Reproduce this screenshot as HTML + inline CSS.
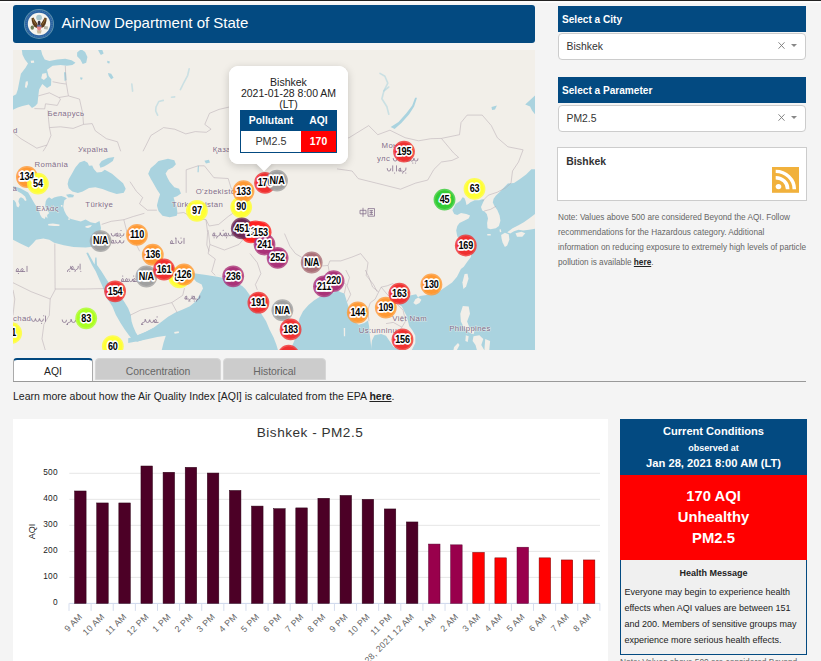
<!DOCTYPE html>
<html><head><meta charset="utf-8"><title>AirNow Department of State</title>
<style>
*{box-sizing:border-box;margin:0;padding:0}
html,body{width:821px;height:661px;overflow:hidden;background:#f4f4f4;font-family:"Liberation Sans",sans-serif;color:#222}
body{position:relative}
.abs{position:absolute}
.blue{background:#034a81;color:#fff}
#topline{left:0;top:0;width:821px;height:1px;background:#222}
#topwhite{left:0;top:1px;width:821px;height:2px;background:#fcfcfc}
#hdr{left:13px;top:5px;width:522px;height:38px;border-radius:3px}
#hdr .t{position:absolute;left:48.6px;top:8px;font-size:15px;line-height:20px;white-space:nowrap}
#map{left:13px;top:50px;width:522px;height:300px;overflow:hidden;background:#f2efe9}
.bar{left:558px;width:248px;height:26px;font-weight:bold;font-size:10.1px;line-height:27.6px;padding-left:4px;white-space:nowrap}
.sel{left:557.5px;width:248.3px;height:27px;background:#fff;border:1px solid #ccc;border-radius:4px;font-size:10.4px;line-height:25px;padding-left:8px;color:#333}
.sel .x{position:absolute;left:219.3px;top:8px;width:7px;height:7px}
.sel .a{position:absolute;left:232.2px;top:9.9px;width:0;height:0;border-left:3.2px solid transparent;border-right:3.2px solid transparent;border-top:3.2px solid #888}
#feed{left:557.4px;top:147px;width:249.6px;height:53.5px;background:#fff;border:1px solid #ccc}
#feed b{position:absolute;left:7.8px;top:6.8px;font-size:10.4px;line-height:14px;color:#333}
#note{left:558px;top:210px;width:260px;font-size:8.23px;line-height:15px;color:#666;white-space:nowrap}
#note b{color:#222;text-decoration:underline}
.tab{top:358px;height:23px;font-size:10.4px;line-height:24px;text-align:center;border-radius:4px 4px 0 0}
.tab.off{background:#ccc;color:#666;border:1px solid #d6d6d6;height:22px;line-height:25.6px}
.tab.on{background:#fff;color:#222;border:1px solid #aaa;border-top:2px solid #034a81;border-bottom:none;height:24px;line-height:23.6px}
#tabline{left:13px;top:381px;width:793px;height:1px;background:#999}
#learn{left:13px;top:389px;font-size:10.5px;line-height:14px;white-space:nowrap;color:#222}
#learn b{text-decoration:underline}
#chart{left:13px;top:419px;width:595px;height:242px;background:#fff;overflow:hidden}
#cc{left:620px;top:419px;width:187px;height:236px;background:#f0f0f0;border:1px solid #034a81;border-top:none}
#cc .h{position:absolute;left:-1px;top:0;width:187px;height:56px;text-align:center;font-weight:bold}
#cc .r{position:absolute;left:-1px;top:56px;width:187px;height:84.5px;background:#ff0000;color:#fff;text-align:center;font-weight:bold;font-size:14.8px;line-height:21px;padding-top:11.2px}
#cc .hm{position:absolute;left:0;top:148px;width:185px;text-align:center;font-weight:bold;font-size:9px;line-height:12px;color:#222}
#cc .tx{position:absolute;left:3.5px;top:164.7px;width:190px;font-size:9px;line-height:16.1px;color:#222;white-space:nowrap}
#note2{left:620px;top:656.3px;font-size:8.4px;line-height:12px;color:#666;white-space:nowrap}
</style></head><body>
<div id="topline" class="abs"></div><div id="topwhite" class="abs"></div>
<div id="hdr" class="abs blue"><div class="t">AirNow Department of State</div>
<svg class="abs" style="left:11px;top:4px" width="30" height="30" viewBox="0 0 30 30"><circle cx="15" cy="15" r="15" fill="#5f93ad"/><circle cx="15" cy="15" r="14.1" fill="#2b63a1"/><circle cx="15" cy="15" r="13" fill="none" stroke="#7fa6c9" stroke-width="0.6" stroke-dasharray="1 1.2" opacity=".7"/><circle cx="15" cy="15" r="11.2" fill="#f6f4ee"/>
<circle cx="15.1" cy="8.6" r="2.9" fill="#a9c7cf"/>
<path d="M7.5 9.2L9.5 8.4L10.9 10.9L12.7 13.8L13.8 15.8L12.7 19L10.4 17.8L8.6 15L7.8 12.1Z" fill="#5b3a1c"/>
<path d="M22.7 9.2L20.7 8.4L19.3 10.9L17.6 13.8L16.4 15.8L17.6 19L19.9 17.8L21.6 15L22.4 12.1Z" fill="#5b3a1c"/>
<path d="M9 9.5L10 12.5L12 15.5M21.2 9.5L20.2 12.5L18.2 15.5" stroke="#c9a24a" stroke-width=".7" fill="none" opacity=".7"/>
<ellipse cx="15.1" cy="14" rx="1.5" ry="2.2" fill="#3a3340"/>
<ellipse cx="8.3" cy="18.6" rx="1.7" ry="2.2" fill="#56663a" opacity=".85"/>
<path d="M20 17l4 .5l-.4 3l-3.6-.6z" fill="#8f8a78" opacity=".6"/>
<path d="M12.7 21.3h5l-.8 3.2h-3.4z" fill="#c9b89a"/>
<path d="M12.95 16.2h4.4v2.8q0 2-2.2 2.7q-2.2-.7-2.2-2.7z" fill="#e58686"/><path d="M12.95 16.2h4.4v1.3h-4.4z" fill="#3b5ea0"/>
</svg>
</div>
<div id="map" class="abs"><svg class="abs" style="left:0;top:0" width="522" height="300" viewBox="0 0 522 300" font-family="Liberation Sans, sans-serif">
<g fill="#aad3df">
<path d="M8.7 -1.3L9.5 4.8L11.9 9.5L15.0 13.5L12.7 17.4L7.9 23.8L6.3 31.7L4.8 39.6L3.2 44.3L-1.3 46.7L-1.3 60.2L4.8 57.6L9.5 56.1L15.8 54.5L19.0 58.1L22.2 56.1L24.5 53.5L25.3 45.9L26.1 39.6L29.3 34.0L34.0 38.0L38.0 35.6L38.3 29.3L35.6 26.1L34.0 19.8L39.6 15.8L47.5 15.0L53.8 15.8L59.4 15.0L62.5 12.7L58.6 10.3L52.3 8.7L44.3 9.5L36.4 11.1L31.7 9.5L29.3 4.8L27.7 -1.3Z"/>
<path d="M64.1 2.4L68.1 -0.8L72.1 1.9L74.4 7.1L73.2 12.7L69.7 13.9L67.3 9.5L64.1 6.3Z"/>
<path d="M84.7 -0.8L89.0 -0.8L90.6 3.5L87.9 5.1L86.3 2.4Z"/>
<path d="M51.0 22.2L52.9 22.2L53.5 30.1L51.6 30.9Z"/>
<path d="M94.2 10.8L96.9 11.4L96.3 13.5L94.4 13.0Z"/>
<path d="M95.0 23.0L98.2 23.8L100.6 27.7L98.2 29.3L95.8 26.1Z"/>
<path d="M67.3 27.2L69.7 27.7L68.9 29.8L67.3 29.3Z"/>
<path d="M54.6 134.0L55.7 129.3L58.9 123.8L62.2 117.7L66.5 112.4L71.3 110.8L74.7 112.7L76.0 115.8L79.2 115.5L80.8 119.0L83.9 122.5L88.7 121.9L91.8 119.8L95.0 121.4L99.0 123.8L104.5 128.5L110.1 133.3L112.7 138.8L110.8 142.8L103.7 143.9L95.8 141.5L89.5 139.1L82.3 137.2L76.0 138.0L69.7 141.5L64.9 143.1L59.4 141.5L55.7 138.3Z"/>
<path d="M86.3 114.3L88.7 111.1L95.0 107.9L101.3 107.1L99.8 111.1L95.0 114.3L91.1 116.6L87.4 117.7Z"/>
<path d="M53.0 144.8L57.0 144.0L61.0 145.1L60.2 147.2L55.4 147.5Z"/>
<path d="M-1.2 135.7L7.3 138.2L15.1 142.4L18.2 147.8L20.6 152.1L22.4 155.1L24.8 158.1L26.0 161.1L27.2 164.8L29.0 167.8L31.7 169.0L32.7 166.6L34.5 168.4L34.1 165.0L36.3 163.0L33.9 159.9L32.1 156.3L32.7 151.5L33.9 149.0L36.1 147.2L38.7 149.0L41.1 147.6L44.8 146.6L48.4 146.0L52.0 147.2L53.9 148.4L51.4 150.3L50.8 153.3L50.2 156.9L51.4 161.1L53.3 164.8L55.7 167.8L58.1 169.0L62.9 170.2L67.8 171.4L72.6 169.6L77.5 172.3L82.3 173.3L86.5 171.1L88.0 178.0L86.5 186.0L84.0 193.0L80.0 196.7L72.6 197.6L60.5 197.0L50.8 195.2L41.2 192.8L36.3 189.8L30.3 188.6L23.0 189.8L20.0 193.2L15.7 197.6L7.3 193.4L0.0 189.8L-5.0 189.5Z"/>
<path d="M73.3 203.0L75.0 202.6L81.6 214.6L82.3 207.5L83.5 207.5L84.0 214.9L88.6 221.6L92.8 228.3L96.1 233.2L105.3 243.2L111.1 251.5L115.2 258.2L117.7 264.8L118.6 271.5L120.2 276.5L122.7 282.3L124.7 285.5L130.2 283.1L136.9 279.8L143.5 276.5L148.5 274.5L148.5 284.0L140.2 286.0L133.5 288.5L124.4 291.8L119.9 290.1L116.1 285.6L111.9 279.8L107.7 273.2L102.8 264.8L99.4 256.5L93.6 247.4L89.5 236.6L86.1 229.1L82.8 221.6L79.0 214.9Z"/>
<path d="M148.7 110.3L155.0 108.7L161.3 110.3L162.9 114.3L159.8 117.4L155.0 119.8L152.6 123.4L154.2 127.2L156.6 131.7L161.3 137.2L166.1 138.8L168.0 143.5L164.0 146.2L160.5 147.5L162.1 152.3L163.7 157.0L164.5 163.3L163.7 165.7L156.6 167.3L149.5 165.7L145.5 161.0L143.9 155.4L145.5 149.1L147.1 144.3L143.9 139.6L140.8 134.0L137.6 128.5L135.2 123.8L137.6 118.2L142.3 114.3L145.5 111.1Z"/>
<path d="M191.4 110.8L195.9 109.8L197.0 112.4L193.0 113.6Z"/>
<path d="M184.8 115.8L186.0 115.8L185.7 122.2L184.5 122.2Z"/>
<path d="M137.0 201.0L141.0 200.5L145.0 204.0L152.0 212.0L162.0 218.0L172.0 220.0L179.5 222.0L177.0 227.0L170.0 231.0L162.0 232.0L157.0 229.0L155.5 222.0L153.0 227.0L147.0 222.0L143.0 215.0L138.0 207.0Z"/>
<path d="M177.8 223.9L179.1 222.3L182.4 223.6L193.3 225.0L204.1 226.8L215.0 228.7L202.0 223.6L210.2 227.0L218.3 230.4L229.2 235.9L232.6 239.3L236.0 244.0L248.3 263.8L253.1 271.3L256.5 279.4L260.6 287.6L263.3 294.4L265.7 302.6L147.9 303.5L150.6 292.6L152.8 285.7L144.2 287.1L135.2 288.9L126.1 291.1L115.2 292.9L115.2 288.2L120.6 287.1L126.1 284.4L133.3 281.7L140.6 277.7L147.9 272.2L155.1 266.8L162.4 262.6L169.7 259.5L176.9 256.3L181.5 252.6L184.2 249.0L187.8 242.6L190.0 238.5L188.7 234.5L183.3 231.7L179.6 227.6Z"/>
<path d="M276.0 303.5L280.6 292.6L283.8 284.4L284.6 276.2L286.4 268.6L290.0 261.3L295.5 255.0L300.9 250.4L306.9 246.8L314.2 243.9L320.9 242.3L324.5 240.5L327.8 242.3L331.4 243.5L333.6 250.8L335.9 258.1L337.8 265.3L341.4 271.7L345.9 274.8L351.4 273.0L355.0 270.4L356.1 276.2L356.8 285.3L357.7 292.6L359.0 303.5Z"/>
<path d="M357.8 302.8L358.4 295.5L359.0 290.6L361.5 285.2L368.2 283.9L373.0 285.8L375.5 289.4L377.9 293.1L380.3 296.7L385.2 299.2L392.5 302.8Z"/>
<path d="M397.4 302.8L402.3 293.1L402.3 285.8L399.8 280.9L396.2 276.0L395.0 271.2L393.1 265.1L391.3 261.4L388.9 256.5L385.2 254.1L392.3 247.2L398.2 245.3L403.1 244.3L405.0 247.2L407.0 245.9L411.8 245.3L419.6 244.3L427.4 240.4L433.3 236.5L439.1 232.6L444.0 226.8L447.9 219.0L450.8 216.8L454.1 212.0L457.9 207.0L458.6 201.7L456.4 196.4L448.8 190.8L444.3 186.5L443.2 180.5L444.3 176.0L446.5 172.9L451.1 170.7L455.6 168.4L457.1 165.4L453.3 163.9L448.0 163.1L444.3 164.9L441.2 163.9L439.4 160.2L442.6 153.9L447.4 150.7L449.6 147.2L451.4 148.1L452.6 151.0L453.5 155.1L455.3 153.9L457.4 152.2L461.7 150.2L466.2 150.2L469.2 149.3L471.5 149.5L470.0 152.5L468.0 157.1L469.2 160.5L471.5 161.6L473.8 163.9L475.0 168.4L474.1 172.9L474.5 178.2L477.5 179.3L482.8 178.2L485.9 176.0L487.4 170.7L486.6 165.4L484.3 160.1L481.6 156.3L479.8 152.5L480.6 148.7L482.8 145.7L487.4 141.2L491.9 136.6L494.9 133.6L501.0 132.9L507.0 129.1L513.1 124.5L518.4 119.2L524.4 119.2L527.0 115.0L527.0 305.0Z"/>
<path d="M377.7 77.0L381.6 78.9L388.4 73.1L396.2 64.3L401.1 56.5L404.0 47.7L402.1 47.7L399.2 55.5L393.3 63.3L385.5 72.1Z"/>
<path d="M512.2 54.6L522.9 44.8L522.9 65.3L519.0 60.4L517.1 56.5Z"/>
<path d="M478.5 56.9L483.9 55.5L482.0 59.4L479.1 60.0Z"/>
<path d="M249.0 113.0L257.0 111.0L269.0 110.0L271.0 112.5L259.0 113.5L251.0 116.0Z"/>
<path d="M259.0 135.0L270.0 134.0L271.0 137.0L260.0 138.0Z"/>
</g><g fill="#f2efe9">
<path d="M12.7 31.7L14.6 30.9L15.0 34.0L13.5 38.0L11.9 37.2Z"/>
<path d="M29.3 23.8L33.3 23.0L34.0 27.2L30.9 30.1L28.2 28.2Z"/>
<path d="M17.7 10.8L20.9 10.5L21.2 12.7L18.1 13.0Z"/>
<path d="M-1.2 138.2L3.6 140.8L8.5 143.6L12.1 146.6L13.6 150.3L12.1 150.9L10.3 148.4L7.9 147.2L6.1 148.8L5.4 151.5L6.7 155.1L5.4 157.5L3.6 156.3L3.0 152.7L1.2 150.3L-1.2 149.7Z"/>
<path d="M35.1 174.1L39.9 173.6L46.6 174.5L46.4 176.0L41.1 175.9L35.3 175.4Z"/>
<path d="M72.4 176.3L75.6 175.4L78.9 175.1L77.5 176.9L75.0 178.1L72.6 177.6Z"/>
<path d="M36.3 156.3L37.8 157.5L39.9 160.5L39.0 161.1L36.9 158.5Z"/>
<path d="M55.1 168.4L56.9 168.2L57.1 169.6L55.4 169.9Z"/>
<path d="M47.8 155.1L49.4 154.9L49.6 156.6L48.2 156.7Z"/>
<path d="M161.1 282.0L165.7 281.3L166.0 283.1L161.7 283.8Z"/>
<path d="M330.7 278.0L332.1 278.0L332.1 286.2L330.9 286.2Z"/>
<path d="M402.3 249.2L405.3 247.4L408.4 249.8L406.5 252.9L402.9 254.7L400.4 252.9Z"/>
<path d="M451.6 224.0L454.5 223.7L455.5 228.7L453.1 236.5L450.4 238.9L449.4 232.6Z"/>
<path d="M449.8 256.0L455.7 256.4L457.0 263.8L454.1 271.6L456.3 277.1L461.5 281.3L460.5 284.3L455.7 282.3L450.8 277.4L447.9 271.6L447.3 263.8Z"/>
<path d="M460.5 286.2L466.4 285.2L470.3 289.1L468.3 295.0L472.2 301.8L464.4 301.8L462.5 295.0L459.6 291.1Z"/>
<path d="M452.8 285.2L455.7 286.2L454.7 292.1L452.4 291.1Z"/>
<path d="M441.1 296.9L445.0 293.0L446.5 295.0L443.0 301.8L440.1 301.8Z"/>
<path d="M472.2 289.1L477.1 291.1L476.1 301.8L471.3 301.8Z"/>
<path d="M488.1 185.0L491.9 182.8L495.7 184.3L496.4 189.6L494.2 195.6L491.9 197.1L489.6 192.6L488.6 188.8Z"/>
<path d="M494.2 182.3L499.5 178.2L505.5 175.2L510.8 172.2L516.1 168.4L524.4 162.3L524.4 178.2L516.1 179.7L510.1 180.5L505.5 179.7L501.0 181.3L497.2 183.5Z"/>
<path d="M502.5 183.2L508.5 181.7L512.3 183.2L509.3 186.8L504.0 186.8Z"/>
<path d="M474.2 184.1L477.7 184.0L477.8 185.5L474.4 185.6Z"/>
<path d="M486.5 179.4L487.8 179.3L488.3 182.0L486.9 182.2Z"/>
</g>
<g fill="none" stroke="#aad3df" stroke-width="1.6" stroke-opacity="0.55" stroke-linecap="round" stroke-linejoin="round">
<path d="M176.2 18.7L174.7 25.3L169.9 34.5L167.4 39.6"/>
<path d="M150.3 50.4L145.8 51.5L143.0 57.0L142.7 61.0L144.6 65.2"/>
<path d="M158.5 47.2L161.7 46.9"/>
<path d="M367.0 23.4L371.9 26.3L374.8 33.1L370.9 40.9L368.9 48.7L373.8 56.5L375.8 64.3"/>
<path d="M370.9 40.9L375.8 37.0"/>
<path d="M118.8 34.0L119.6 41.2"/>
</g><g fill="none" stroke="#b7aab2" stroke-width="0.7" stroke-opacity="0.75" stroke-linejoin="round">
<path d="M52.3 15.8L53.0 31.7L55.4 45.9L66.5 49.1L69.7 63.3L70.5 74.4L79.2 73.6L82.3 80.8L93.4 88.7L104.5 91.8L107.7 101.3"/>
<path d="M25.3 45.9L36.4 42.8L45.9 47.5L55.4 45.9"/>
<path d="M39.6 31.7L47.5 33.3L53.0 34.0"/>
<path d="M34.8 60.2L35.6 69.7L36.4 77.6L38.0 85.5L34.0 95.0L30.1 101.3"/>
<path d="M36.4 77.6L47.5 76.8L60.2 78.4L70.5 74.4"/>
<path d="M21.4 58.6L31.7 58.9L32.5 53.8L44.3 55.4L47.5 49.1L45.9 47.5"/>
<path d="M0.0 82.3L7.9 88.7L15.8 93.4L23.8 98.2L34.0 95.0"/>
<path d="M130.0 101.3L133.2 95.0L137.9 85.5L150.6 77.6L161.7 79.2L172.8 83.9L182.3 81.6L193.3 82.3L198.1 79.2L191.8 74.4L196.5 63.3L206.0 59.4L216.3 57.0"/>
<path d="M324.0 90.8L336.1 87.7L355.7 75.6L364.8 84.7L376.9 80.2L392.1 87.7L405.7 90.8L417.8 88.7L428.4 88.4L432.9 93.8L440.5 102.9L445.6 107.4L439.0 110.4L428.4 112.0L420.8 119.5L414.7 130.1L402.6 133.1L387.5 139.2L363.3 133.1L345.2 128.6L339.1 121.0L324.0 118.9"/>
<path d="M428.4 88.4L446.5 84.7L448.0 72.6L454.1 65.1L469.2 65.1L478.3 75.6L484.3 87.7L494.9 96.8L510.1 99.8L505.5 112.0L499.5 121.0L498.0 133.1L492.8 137.7L484.3 142.2L475.3 145.2L469.2 151.3"/>
<path d="M173.2 142.8L173.2 119.8L185.1 115.8L191.4 115.8L200.9 127.7L215.2 128.5L218.3 138.8L227.8 141.2"/>
<path d="M164.5 163.3L170.8 162.5L180.3 168.1L193.0 169.7L196.2 176.0L205.7 174.4L215.2 166.5L219.9 163.3"/>
<path d="M193.0 169.7L194.6 182.3L193.8 195.0L196.2 201.3"/>
<path d="M117.0 131.7L123.3 141.2L129.7 147.5L126.5 153.8L134.4 160.2L143.9 160.2"/>
<path d="M88.7 174.4L98.2 171.3L110.8 169.7L120.3 166.5L131.4 163.3"/>
<path d="M110.8 169.7L114.0 182.3L120.3 188.7L126.7 201.3"/>
<path d="M41.8 193.6L42.1 239.9L37.2 249.0L36.3 265.3L30.9 274.4L29.0 288.9L32.7 301.6"/>
<path d="M42.1 239.0L72.6 239.0L91.7 238.5"/>
<path d="M0.0 232.7L18.2 241.7L37.2 249.0"/>
<path d="M0.0 265.3L1.8 249.0L0.0 239.9"/>
<path d="M117.0 265.3L127.9 259.9L144.2 256.3L158.8 252.6L169.7 245.4L171.5 238.1"/>
<path d="M158.8 252.6L164.2 262.6"/>
<path d="M195.1 180.0L196.9 194.5L195.1 203.6L202.3 209.0L198.7 221.8L202.3 225.4"/>
<path d="M196.9 194.5L211.4 200.0L225.9 194.5L235.0 183.6L244.1 180.0"/>
<path d="M237.0 203.6L244.3 212.7L247.9 223.6L242.4 234.5L244.3 239.9"/>
<path d="M271.5 183.6L276.9 196.3L282.4 203.6L291.5 209.0L306.0 216.3L315.1 215.4L316.9 210.9L327.8 210.9L338.7 207.2L347.7 203.6L355.0 212.7L353.2 225.4L360.5 234.5L364.1 241.7"/>
<path d="M315.1 215.4L316.9 225.4L327.8 230.8L333.2 234.5L331.4 243.5"/>
<path d="M332.8 220.0L336.5 227.3L334.1 235.8L337.7 244.4L334.1 251.7"/>
<path d="M352.3 220.0L356.0 227.3L359.6 237.1L365.7 241.9L368.2 237.1L374.2 235.8L380.3 233.4"/>
<path d="M365.7 241.9L362.1 249.2L357.2 252.9L354.8 260.2L356.0 271.2"/>
<path d="M368.2 237.1L374.2 244.4L382.8 252.9L390.1 260.2L392.5 271.2L388.9 277.2L385.2 283.3"/>
<path d="M373.0 273.6L380.3 272.4L388.9 277.2"/>
<path d="M471.2 161.0L477.5 159.4L483.1 156.2"/>
</g>
<g font-size="7.8" fill="#7a6585" fill-opacity="0.95" letter-spacing="0.35" stroke="#f2efe9" stroke-width="1.2" stroke-opacity="0.6" paint-order="stroke">
<text x="53.0" y="65.8" text-anchor="middle">Беларусь</text>
<text x="80.0" y="101.6" text-anchor="middle">Україна</text>
<text x="38.4" y="117.2" text-anchor="middle">România</text>
<text x="34.4" y="161.2" text-anchor="middle">Ελλάς</text>
<text x="86.3" y="157.2" text-anchor="middle">Türkiye</text>
<text x="184.5" y="157.2" text-anchor="middle">Türkmenistan</text>
<text x="457.0" y="281.2" text-anchor="middle">Philippines</text>
<text x="396.7" y="270.6" text-anchor="middle">Việt Nam</text>
<text x="365.0" y="282.6" text-anchor="middle">Us:unnlnu</text>
<text x="0.0" y="83.0">d</text>
<text x="-0.5" y="140.5">a</text>
<text x="199.7" y="101.6">Қазақстан</text>
<text x="182.7" y="143.5">O'zbekiston</text>
<text x="0.0" y="271.3">chad</text>
<text x="368.5" y="98.3">Монгол</text>
<text x="364.0" y="111.0">улс</text>
</g>
<path d="M171.0 193.5v-5.2M169.0 191.3q0.2 2.4 -2.0 2.3q-1.8 0 -1.8 -2.6M163.0 193.5v-5.2M161.0 193.5h-3.6q0 -3 1.6 -3q1.2 0.5 0 2.8" fill="none" stroke="#7a6585" stroke-width="0.85" stroke-opacity="0.85" stroke-linecap="round"/><g fill="#7a6585" fill-opacity="0.85"><circle cx="168.0" cy="188.0" r="0.55"/><circle cx="162.7" cy="188.0" r="0.55"/></g>
<path d="M111.0 183.8q0.2 2.4 -2.2 2.3q-1.9 0 -1.9 -2.6M106.7 186.0h-3.9q0 -3 1.7 -3q1.3 0.5 0 2.8M102.3 183.8q0.2 2.4 -2.2 2.3q-1.9 0 -1.9 -2.6" fill="none" stroke="#7a6585" stroke-width="0.85" stroke-opacity="0.85" stroke-linecap="round"/><g fill="#7a6585" fill-opacity="0.85"><circle cx="108.0" cy="180.5" r="0.55"/></g>
<path d="M111.0 190.8q0.2 2.4 -2.2 2.3q-1.9 0 -1.9 -2.6M106.7 190.8q0.2 2.4 -2.2 2.3q-1.9 0 -1.9 -2.6M102.3 193.0h-3.9q0 -3 1.7 -3q1.3 0.5 0 2.8" fill="none" stroke="#7a6585" stroke-width="0.85" stroke-opacity="0.85" stroke-linecap="round"/><g fill="#7a6585" fill-opacity="0.85"><circle cx="107.6" cy="187.5" r="0.55"/></g>
<path d="M223.0 185.8h-3.6q0 -3 1.6 -3q1.2 0.5 0 2.8M219.1 183.6q0.2 2.4 -2.0 2.3q-1.8 0 -1.8 -2.6M215.1 185.8h-3.6q0 -3 1.6 -3q1.2 0.5 0 2.8M211.2 183.6q0.2 2.4 -2.0 2.3q-1.8 0 -1.8 -2.6M207.2 182.8q0.3 3 -1.6 3q-2.0 0.2 -2.0 2.2M203.3 185.8h-3.6q0 -3 1.6 -3q1.2 0.5 0 2.8" fill="none" stroke="#7a6585" stroke-width="0.85" stroke-opacity="0.85" stroke-linecap="round"/><g fill="#7a6585" fill-opacity="0.85"><circle cx="210.2" cy="180.3" r="0.55"/><circle cx="213.5" cy="187.8" r="0.55"/><circle cx="201.1" cy="187.8" r="0.55"/></g>
<path d="M67.1 219.3v-5.2M65.3 216.3q0.3 3 -1.5 3q-1.9 0.2 -1.9 2.2M61.6 219.3h-3.4q0 -3 1.5 -3q1.1 0.5 0 2.8M57.8 216.3q0.3 3 -1.5 3q-1.9 0.2 -1.9 2.2" fill="none" stroke="#7a6585" stroke-width="0.85" stroke-opacity="0.85" stroke-linecap="round"/><g fill="#7a6585" fill-opacity="0.85"><circle cx="56.7" cy="221.3" r="0.55"/><circle cx="67.8" cy="221.3" r="0.55"/></g>
<path d="M14.0 221.5v-5.2M11.8 221.5h-4.1q0 -3 1.8 -3q1.4 0.5 0 2.8M7.2 221.5h-4.1q0 -3 1.8 -3q1.4 0.5 0 2.8" fill="none" stroke="#7a6585" stroke-width="0.85" stroke-opacity="0.85" stroke-linecap="round"/><g fill="#7a6585" fill-opacity="0.85"><circle cx="5.4" cy="223.5" r="0.55"/></g>
<path d="M123.5 231.5h-3.5q0 -3 1.6 -3q1.2 0.5 0 2.8M119.6 229.3q0.2 2.4 -1.9 2.3q-1.7 0 -1.7 -2.6M115.8 231.5h-3.5q0 -3 1.6 -3q1.2 0.5 0 2.8M111.9 231.5h-3.5q0 -3 1.6 -3q1.2 0.5 0 2.8" fill="none" stroke="#7a6585" stroke-width="0.85" stroke-opacity="0.85" stroke-linecap="round"/><g fill="#7a6585" fill-opacity="0.85"><circle cx="109.7" cy="226.0" r="0.55"/><circle cx="120.7" cy="226.0" r="0.55"/></g>
<path d="M186.9 246.0q0.3 3 -1.5 3q-1.9 0.2 -1.9 2.2M183.1 249.0h-3.5q0 -3 1.5 -3q1.2 0.5 0 2.8M179.2 246.0q0.3 3 -1.5 3q-1.9 0.2 -1.9 2.2M175.4 249.0h-3.5q0 -3 1.5 -3q1.2 0.5 0 2.8" fill="none" stroke="#7a6585" stroke-width="0.85" stroke-opacity="0.85" stroke-linecap="round"/><g fill="#7a6585" fill-opacity="0.85"><circle cx="176.9" cy="251.0" r="0.55"/><circle cx="181.3" cy="251.0" r="0.55"/></g>
<path d="M145.1 272.4h-3.9q0 -3 1.7 -3q1.3 0.5 0 2.8M140.8 270.2q0.2 2.4 -2.1 2.3q-1.9 0 -1.9 -2.6M136.5 270.2q0.2 2.4 -2.1 2.3q-1.9 0 -1.9 -2.6M132.2 269.4q0.3 3 -1.7 3q-2.1 0.2 -2.1 2.2" fill="none" stroke="#7a6585" stroke-width="0.85" stroke-opacity="0.85" stroke-linecap="round"/><g fill="#7a6585" fill-opacity="0.85"><circle cx="129.7" cy="274.4" r="0.55"/><circle cx="144.1" cy="266.9" r="0.55"/></g>
<path d="M32.5 271.3v-5.2M30.4 269.1q0.2 2.4 -2.0 2.3q-1.8 0 -1.8 -2.6M26.3 269.1q0.2 2.4 -2.0 2.3q-1.8 0 -1.8 -2.6M22.3 269.1q0.2 2.4 -2.0 2.3q-1.8 0 -1.8 -2.6" fill="none" stroke="#7a6585" stroke-width="0.85" stroke-opacity="0.85" stroke-linecap="round"/><g fill="#7a6585" fill-opacity="0.85"><circle cx="30.7" cy="265.8" r="0.55"/><circle cx="28.6" cy="273.3" r="0.55"/></g>
<path d="M62.6 270.2q0.2 2.4 -2.3 2.3q-2.0 0 -2.0 -2.6M58.1 269.4q0.3 3 -1.8 3q-2.3 0.2 -2.3 2.2M53.5 270.2q0.2 2.4 -2.3 2.3q-2.0 0 -2.0 -2.6" fill="none" stroke="#7a6585" stroke-width="0.85" stroke-opacity="0.85" stroke-linecap="round"/><g fill="#7a6585" fill-opacity="0.85"><circle cx="54.2" cy="274.4" r="0.55"/></g>
<path d="M405.0 108.8q0.2 2.4 -2.1 2.3q-1.9 0 -1.9 -2.6M400.8 108.8q0.2 2.4 -2.1 2.3q-1.9 0 -1.9 -2.6M396.7 111.0h-3.8q0 -3 1.7 -3q1.2 0.5 0 2.8M392.5 108.8q0.2 2.4 -2.1 2.3q-1.9 0 -1.9 -2.6M386.2 111.0v-5.2M384.2 108.8q0.2 2.4 -2.1 2.3q-1.9 0 -1.9 -2.6" fill="none" stroke="#7a6585" stroke-width="0.85" stroke-opacity="0.85" stroke-linecap="round"/><g fill="#7a6585" fill-opacity="0.85"><circle cx="402.4" cy="113.0" r="0.55"/><circle cx="399.0" cy="105.5" r="0.55"/><circle cx="399.8" cy="113.0" r="0.55"/></g>
<path d="M393.0 118.0q0.3 3 -1.5 3q-1.9 0.2 -1.9 2.2M389.2 121.0h-3.4q0 -3 1.5 -3q1.1 0.5 0 2.8M383.5 121.0v-5.2M379.7 121.0v-5.2M377.8 118.8q0.2 2.4 -1.9 2.3q-1.7 0 -1.7 -2.6" fill="none" stroke="#7a6585" stroke-width="0.85" stroke-opacity="0.85" stroke-linecap="round"/><g fill="#7a6585" fill-opacity="0.85"><circle cx="392.8" cy="123.0" r="0.55"/><circle cx="381.6" cy="123.0" r="0.55"/></g>
<g fill="none" stroke="#7a6585" stroke-width="0.8" stroke-opacity="0.9"><path d="M347.0 160.3h6v3.5h-6zM350.0 157.8v9"/><path d="M355.0 158.60000000000002h6.5v7.6h-6.5zM356.5 160.60000000000002h3.5M356.5 162.4h3.5M356.5 164.4h3.5M358.25 160.60000000000002v3.8"/></g>
<g text-anchor="middle" font-size="10.3" font-weight="bold" letter-spacing="-0.2" fill="#000" stroke-linejoin="round">
<circle cx="13.9" cy="127.0" r="10.9" fill="#ff9933" fill-opacity="0.8"/><circle cx="13.9" cy="127.0" r="9.4" fill="#ff9933"/>
<circle cx="24.9" cy="133.6" r="10.9" fill="#ffff33" fill-opacity="0.8"/><circle cx="24.9" cy="133.6" r="9.4" fill="#ffff33"/>
<circle cx="87.6" cy="191.1" r="10.9" fill="#a0a0a0" fill-opacity="0.8"/><circle cx="87.6" cy="191.1" r="9.4" fill="#a0a0a0"/>
<circle cx="124.0" cy="184.9" r="10.9" fill="#ff9933" fill-opacity="0.8"/><circle cx="124.0" cy="184.9" r="9.4" fill="#ff9933"/>
<circle cx="133.4" cy="226.5" r="10.9" fill="#a0a0a0" fill-opacity="0.8"/><circle cx="133.4" cy="226.5" r="9.4" fill="#a0a0a0"/>
<circle cx="139.8" cy="204.7" r="10.9" fill="#ff9933" fill-opacity="0.8"/><circle cx="139.8" cy="204.7" r="9.4" fill="#ff9933"/>
<circle cx="166.4" cy="227.4" r="10.9" fill="#ffff33" fill-opacity="0.8"/><circle cx="166.4" cy="227.4" r="9.4" fill="#ffff33"/>
<circle cx="151.0" cy="219.5" r="10.9" fill="#f03030" fill-opacity="0.8"/><circle cx="151.0" cy="219.5" r="9.4" fill="#f03030"/>
<circle cx="171.0" cy="224.5" r="10.9" fill="#ff9933" fill-opacity="0.8"/><circle cx="171.0" cy="224.5" r="9.4" fill="#ff9933"/>
<circle cx="102.1" cy="241.3" r="10.9" fill="#f03030" fill-opacity="0.8"/><circle cx="102.1" cy="241.3" r="9.4" fill="#f03030"/>
<circle cx="73.2" cy="268.3" r="10.9" fill="#aaff22" fill-opacity="0.8"/><circle cx="73.2" cy="268.3" r="9.4" fill="#aaff22"/>
<circle cx="-1.8" cy="283.1" r="10.9" fill="#ffff33" fill-opacity="0.8"/><circle cx="-1.8" cy="283.1" r="9.4" fill="#ffff33"/>
<circle cx="99.8" cy="296.2" r="10.9" fill="#ffff33" fill-opacity="0.8"/><circle cx="99.8" cy="296.2" r="9.4" fill="#ffff33"/>
<circle cx="183.9" cy="160.8" r="10.9" fill="#ffff33" fill-opacity="0.8"/><circle cx="183.9" cy="160.8" r="9.4" fill="#ffff33"/>
<circle cx="228.2" cy="157.1" r="10.9" fill="#ffff33" fill-opacity="0.8"/><circle cx="228.2" cy="157.1" r="9.4" fill="#ffff33"/>
<circle cx="230.5" cy="141.2" r="10.9" fill="#ff9933" fill-opacity="0.8"/><circle cx="230.5" cy="141.2" r="9.4" fill="#ff9933"/>
<circle cx="252.0" cy="132.8" r="10.9" fill="#f03030" fill-opacity="0.8"/><circle cx="252.0" cy="132.8" r="9.4" fill="#f03030"/>
<circle cx="264.0" cy="130.6" r="10.9" fill="#a0a0a0" fill-opacity="0.8"/><circle cx="264.0" cy="130.6" r="9.4" fill="#a0a0a0"/>
<circle cx="238.0" cy="182.3" r="10.9" fill="#ff2222" fill-opacity="0.8"/><circle cx="238.0" cy="182.3" r="9.4" fill="#ff2222"/>
<circle cx="228.8" cy="178.4" r="10.9" fill="#6e2a55" fill-opacity="0.8"/><circle cx="228.8" cy="178.4" r="9.4" fill="#6e2a55"/>
<circle cx="242.5" cy="181.5" r="10.9" fill="#ff2222" fill-opacity="0.8"/><circle cx="242.5" cy="181.5" r="9.4" fill="#ff2222"/>
<circle cx="247.6" cy="182.2" r="10.9" fill="#ff2222" fill-opacity="0.8"/><circle cx="247.6" cy="182.2" r="9.4" fill="#ff2222"/>
<circle cx="251.5" cy="194.5" r="10.9" fill="#aa3278" fill-opacity="0.8"/><circle cx="251.5" cy="194.5" r="9.4" fill="#aa3278"/>
<circle cx="264.6" cy="207.9" r="10.9" fill="#aa3278" fill-opacity="0.8"/><circle cx="264.6" cy="207.9" r="9.4" fill="#aa3278"/>
<circle cx="298.7" cy="212.5" r="10.9" fill="#aa7078" fill-opacity="0.8"/><circle cx="298.7" cy="212.5" r="9.4" fill="#aa7078"/>
<circle cx="220.2" cy="226.3" r="10.9" fill="#aa3278" fill-opacity="0.8"/><circle cx="220.2" cy="226.3" r="9.4" fill="#aa3278"/>
<circle cx="311.0" cy="236.4" r="10.9" fill="#aa3278" fill-opacity="0.8"/><circle cx="311.0" cy="236.4" r="9.4" fill="#aa3278"/>
<circle cx="320.6" cy="231.1" r="10.9" fill="#aa3278" fill-opacity="0.8"/><circle cx="320.6" cy="231.1" r="9.4" fill="#aa3278"/>
<circle cx="245.4" cy="252.7" r="10.9" fill="#f03030" fill-opacity="0.8"/><circle cx="245.4" cy="252.7" r="9.4" fill="#f03030"/>
<circle cx="269.4" cy="260.2" r="10.9" fill="#a0a0a0" fill-opacity="0.8"/><circle cx="269.4" cy="260.2" r="9.4" fill="#a0a0a0"/>
<circle cx="277.6" cy="279.4" r="10.9" fill="#f03030" fill-opacity="0.8"/><circle cx="277.6" cy="279.4" r="9.4" fill="#f03030"/>
<circle cx="275.6" cy="305.6" r="10.9" fill="#f03030" fill-opacity="0.8"/><circle cx="275.6" cy="305.6" r="9.4" fill="#f03030"/>
<circle cx="344.8" cy="262.5" r="10.9" fill="#ff9933" fill-opacity="0.8"/><circle cx="344.8" cy="262.5" r="9.4" fill="#ff9933"/>
<circle cx="372.8" cy="257.6" r="10.9" fill="#ff9933" fill-opacity="0.8"/><circle cx="372.8" cy="257.6" r="9.4" fill="#ff9933"/>
<circle cx="386.4" cy="243.6" r="10.9" fill="#f03030" fill-opacity="0.8"/><circle cx="386.4" cy="243.6" r="9.4" fill="#f03030"/>
<circle cx="418.4" cy="234.5" r="10.9" fill="#ff9933" fill-opacity="0.8"/><circle cx="418.4" cy="234.5" r="9.4" fill="#ff9933"/>
<circle cx="389.5" cy="289.5" r="10.9" fill="#f03030" fill-opacity="0.8"/><circle cx="389.5" cy="289.5" r="9.4" fill="#f03030"/>
<circle cx="452.8" cy="195.5" r="10.9" fill="#f03030" fill-opacity="0.8"/><circle cx="452.8" cy="195.5" r="9.4" fill="#f03030"/>
<circle cx="431.5" cy="149.6" r="10.9" fill="#33cc33" fill-opacity="0.8"/><circle cx="431.5" cy="149.6" r="9.4" fill="#33cc33"/>
<circle cx="461.5" cy="138.9" r="10.9" fill="#ffff33" fill-opacity="0.8"/><circle cx="461.5" cy="138.9" r="9.4" fill="#ffff33"/>
<circle cx="391.0" cy="101.6" r="10.9" fill="#f03030" fill-opacity="0.8"/><circle cx="391.0" cy="101.6" r="9.4" fill="#f03030"/>
<g transform="translate(13.9 130.3) scale(0.88 1)"><text stroke="#fff" stroke-width="3.3">134</text><text>134</text></g>
<g transform="translate(24.9 136.9) scale(0.88 1)"><text stroke="#fff" stroke-width="3.3">54</text><text>54</text></g>
<g transform="translate(87.6 194.4) scale(0.88 1)"><text stroke="#fff" stroke-width="3.3">N/A</text><text>N/A</text></g>
<g transform="translate(124.0 188.2) scale(0.88 1)"><text stroke="#fff" stroke-width="3.3">110</text><text>110</text></g>
<g transform="translate(133.4 229.8) scale(0.88 1)"><text stroke="#fff" stroke-width="3.3">N/A</text><text>N/A</text></g>
<g transform="translate(139.8 208.0) scale(0.88 1)"><text stroke="#fff" stroke-width="3.3">136</text><text>136</text></g>
<g transform="translate(166.4 230.7) scale(0.88 1)"><text stroke="#fff" stroke-width="3.3">85</text><text>85</text></g>
<g transform="translate(151.0 222.8) scale(0.88 1)"><text stroke="#fff" stroke-width="3.3">161</text><text>161</text></g>
<g transform="translate(171.0 227.8) scale(0.88 1)"><text stroke="#fff" stroke-width="3.3">126</text><text>126</text></g>
<g transform="translate(102.1 244.6) scale(0.88 1)"><text stroke="#fff" stroke-width="3.3">154</text><text>154</text></g>
<g transform="translate(73.2 271.6) scale(0.88 1)"><text stroke="#fff" stroke-width="3.3">83</text><text>83</text></g>
<g transform="translate(-1.8 286.4) scale(0.88 1)"><text stroke="#fff" stroke-width="3.3">51</text><text>51</text></g>
<g transform="translate(99.8 299.5) scale(0.88 1)"><text stroke="#fff" stroke-width="3.3">60</text><text>60</text></g>
<g transform="translate(183.9 164.1) scale(0.88 1)"><text stroke="#fff" stroke-width="3.3">97</text><text>97</text></g>
<g transform="translate(228.2 160.4) scale(0.88 1)"><text stroke="#fff" stroke-width="3.3">90</text><text>90</text></g>
<g transform="translate(230.5 144.5) scale(0.88 1)"><text stroke="#fff" stroke-width="3.3">133</text><text>133</text></g>
<g transform="translate(252.0 136.1) scale(0.88 1)"><text stroke="#fff" stroke-width="3.3">170</text><text>170</text></g>
<g transform="translate(264.0 133.9) scale(0.88 1)"><text stroke="#fff" stroke-width="3.3">N/A</text><text>N/A</text></g>
<g transform="translate(238.0 185.6) scale(0.88 1)"><text stroke="#fff" stroke-width="3.3">16</text><text>16</text></g>
<g transform="translate(228.8 181.7) scale(0.88 1)"><text stroke="#fff" stroke-width="3.3">451</text><text>451</text></g>
<g transform="translate(242.5 184.8) scale(0.88 1)"><text stroke="#fff" stroke-width="3.3">16</text><text>16</text></g>
<g transform="translate(247.6 185.5) scale(0.88 1)"><text stroke="#fff" stroke-width="3.3">153</text><text>153</text></g>
<g transform="translate(251.5 197.8) scale(0.88 1)"><text stroke="#fff" stroke-width="3.3">241</text><text>241</text></g>
<g transform="translate(264.6 211.2) scale(0.88 1)"><text stroke="#fff" stroke-width="3.3">252</text><text>252</text></g>
<g transform="translate(298.7 215.8) scale(0.88 1)"><text stroke="#fff" stroke-width="3.3">N/A</text><text>N/A</text></g>
<g transform="translate(220.2 229.6) scale(0.88 1)"><text stroke="#fff" stroke-width="3.3">236</text><text>236</text></g>
<g transform="translate(311.0 239.7) scale(0.88 1)"><text stroke="#fff" stroke-width="3.3">211</text><text>211</text></g>
<g transform="translate(320.6 234.4) scale(0.88 1)"><text stroke="#fff" stroke-width="3.3">220</text><text>220</text></g>
<g transform="translate(245.4 256.0) scale(0.88 1)"><text stroke="#fff" stroke-width="3.3">191</text><text>191</text></g>
<g transform="translate(269.4 263.5) scale(0.88 1)"><text stroke="#fff" stroke-width="3.3">N/A</text><text>N/A</text></g>
<g transform="translate(277.6 282.7) scale(0.88 1)"><text stroke="#fff" stroke-width="3.3">183</text><text>183</text></g>
<g transform="translate(275.6 308.9) scale(0.88 1)"><text stroke="#fff" stroke-width="3.3"></text><text></text></g>
<g transform="translate(344.8 265.8) scale(0.88 1)"><text stroke="#fff" stroke-width="3.3">144</text><text>144</text></g>
<g transform="translate(372.8 260.9) scale(0.88 1)"><text stroke="#fff" stroke-width="3.3">109</text><text>109</text></g>
<g transform="translate(386.4 246.9) scale(0.88 1)"><text stroke="#fff" stroke-width="3.3">163</text><text>163</text></g>
<g transform="translate(418.4 237.8) scale(0.88 1)"><text stroke="#fff" stroke-width="3.3">130</text><text>130</text></g>
<g transform="translate(389.5 292.8) scale(0.88 1)"><text stroke="#fff" stroke-width="3.3">156</text><text>156</text></g>
<g transform="translate(452.8 198.8) scale(0.88 1)"><text stroke="#fff" stroke-width="3.3">169</text><text>169</text></g>
<g transform="translate(431.5 152.9) scale(0.88 1)"><text stroke="#fff" stroke-width="3.3">45</text><text>45</text></g>
<g transform="translate(461.5 142.2) scale(0.88 1)"><text stroke="#fff" stroke-width="3.3">63</text><text>63</text></g>
<g transform="translate(391.0 104.9) scale(0.88 1)"><text stroke="#fff" stroke-width="3.3">195</text><text>195</text></g>
</g>
</svg>
<div class="abs" style="left:216px;top:16px;width:119px;height:98px;background:#fff;border-radius:9px;box-shadow:0 2px 8px rgba(0,0,0,.18)"></div>
<div class="abs" style="left:244.5px;top:107px;width:12px;height:12px;background:#fff;transform:rotate(45deg);box-shadow:2px 2px 5px rgba(0,0,0,.12)"></div>
<div class="abs" style="left:216px;top:16px;width:119px;height:98px;background:#fff;border-radius:9px"></div>
<div class="abs" style="left:216px;top:27px;width:119px;text-align:center;font-size:10.5px;line-height:11.1px;color:#222">Bishkek<br>2021-01-28 8:00 AM<br>(LT)</div>
<div class="abs" style="left:227px;top:60px;width:97px;height:43px;border:1px solid #034a81;background:#fff">
<div class="abs blue" style="left:0;top:0;width:95px;height:20px;font-weight:bold;font-size:10.4px;line-height:19px"><span class="abs" style="left:0;width:60px;text-align:center">Pollutant</span><span class="abs" style="left:60px;width:35px;text-align:center">AQI</span></div>
<div class="abs" style="left:0;top:20px;width:60px;height:21px;text-align:center;font-size:10.8px;line-height:21px;color:#333">PM2.5</div>
<div class="abs" style="left:60px;top:20px;width:35px;height:21px;background:#ff0000;color:#fff;font-weight:bold;text-align:center;font-size:10.4px;line-height:21px">170</div>
</div></div>

<div class="abs bar blue" style="top:6px">Select a City</div>
<div class="abs sel" style="top:33.4px">Bishkek<svg class="x" viewBox="0 0 7 7"><path d="M0.5 0.3L6.5 6.7M6.5 0.3L0.5 6.7" stroke="#777" stroke-width="0.9" fill="none"/></svg><span class="a"></span></div>
<div class="abs bar blue" style="top:77px">Select a Parameter</div>
<div class="abs sel" style="top:105px">PM2.5<svg class="x" viewBox="0 0 7 7"><path d="M0.5 0.3L6.5 6.7M6.5 0.3L0.5 6.7" stroke="#777" stroke-width="0.9" fill="none"/></svg><span class="a"></span></div>
<div id="feed" class="abs"><b>Bishkek</b>
<svg class="abs" style="left:213.7px;top:19.1px" width="27" height="25.8" viewBox="0 0 27 27" preserveAspectRatio="none"><rect width="27" height="27" fill="#f1b13c"/><circle cx="6.5" cy="20.5" r="2.8" fill="#fff"/><path d="M3.7 11.2a12 12 0 0 1 12 12M3.7 4.6a18.6 18.6 0 0 1 18.6 18.6" fill="none" stroke="#fff" stroke-width="3.6"/></svg>
</div>
<div id="note" class="abs">Note: Values above 500 are considered Beyond the AQI. Follow<br>recommendations for the Hazardous category. Additional<br>information on reducing exposure to extremely high levels of particle<br>pollution is available <b>here</b>.</div>

<div class="abs tab on" style="left:13px;width:80px">AQI</div>
<div class="abs tab off" style="left:95px;width:126px">Concentration</div>
<div class="abs tab off" style="left:223px;width:103px">Historical</div>
<div id="tabline" class="abs"></div>
<div id="learn" class="abs">Learn more about how the Air Quality Index [AQI] is calculated from the EPA <b>here</b>.</div>

<div id="chart" class="abs"><svg class="abs" style="left:0;top:-1px" width="595" height="243" viewBox="0 0 595 243" font-family="Liberation Sans, sans-serif">
<text x="297" y="18.6" text-anchor="middle" font-size="13.6" fill="#333" letter-spacing="0.5">Bishkek - PM2.5</text>
<path d="M56.3 185.40H587" stroke="#ccd6eb" stroke-width="1"/>
<text x="44.8" y="187.10" text-anchor="end" font-size="8.3" fill="#222" letter-spacing="0.25">0</text>
<path d="M56.3 159.38H587" stroke="#e6e6e6" stroke-width="1"/>
<text x="44.8" y="161.08" text-anchor="end" font-size="8.3" fill="#222" letter-spacing="0.25">100</text>
<path d="M56.3 133.36H587" stroke="#e6e6e6" stroke-width="1"/>
<text x="44.8" y="135.06" text-anchor="end" font-size="8.3" fill="#222" letter-spacing="0.25">200</text>
<path d="M56.3 107.34H587" stroke="#e6e6e6" stroke-width="1"/>
<text x="44.8" y="109.04" text-anchor="end" font-size="8.3" fill="#222" letter-spacing="0.25">300</text>
<path d="M56.3 81.32H587" stroke="#e6e6e6" stroke-width="1"/>
<text x="44.8" y="83.02" text-anchor="end" font-size="8.3" fill="#222" letter-spacing="0.25">400</text>
<path d="M56.3 55.30H587" stroke="#e6e6e6" stroke-width="1"/>
<text x="44.8" y="57.00" text-anchor="end" font-size="8.3" fill="#222" letter-spacing="0.25">500</text>
<text transform="translate(22.4,113.5) rotate(-90)" text-anchor="middle" font-size="9" fill="#222">AQI</text>
<rect x="61.60" y="72.99" width="11.5" height="112.41" fill="#4c0026" stroke="#2a0015" stroke-width="0.5"/>
<path d="M56.00 185.40v7.5" stroke="#d6deee" stroke-width="1"/>
<text transform="translate(69.95,199.30) rotate(-45)" text-anchor="end" font-size="8.8" letter-spacing="0.3" fill="#666">9 AM</text>
<rect x="83.72" y="84.96" width="11.5" height="100.44" fill="#4c0026" stroke="#2a0015" stroke-width="0.5"/>
<path d="M78.12 185.40v7.5" stroke="#d6deee" stroke-width="1"/>
<text transform="translate(92.07,199.30) rotate(-45)" text-anchor="end" font-size="8.8" letter-spacing="0.3" fill="#666">10 AM</text>
<rect x="105.84" y="84.96" width="11.5" height="100.44" fill="#4c0026" stroke="#2a0015" stroke-width="0.5"/>
<path d="M100.24 185.40v7.5" stroke="#d6deee" stroke-width="1"/>
<text transform="translate(114.19,199.30) rotate(-45)" text-anchor="end" font-size="8.8" letter-spacing="0.3" fill="#666">11 AM</text>
<rect x="127.96" y="48.01" width="11.5" height="137.39" fill="#4c0026" stroke="#2a0015" stroke-width="0.5"/>
<path d="M122.36 185.40v7.5" stroke="#d6deee" stroke-width="1"/>
<text transform="translate(136.31,199.30) rotate(-45)" text-anchor="end" font-size="8.8" letter-spacing="0.3" fill="#666">12 PM</text>
<rect x="150.08" y="54.26" width="11.5" height="131.14" fill="#4c0026" stroke="#2a0015" stroke-width="0.5"/>
<path d="M144.48 185.40v7.5" stroke="#d6deee" stroke-width="1"/>
<text transform="translate(158.43,199.30) rotate(-45)" text-anchor="end" font-size="8.8" letter-spacing="0.3" fill="#666">1 PM</text>
<rect x="172.20" y="49.32" width="11.5" height="136.08" fill="#4c0026" stroke="#2a0015" stroke-width="0.5"/>
<path d="M166.60 185.40v7.5" stroke="#d6deee" stroke-width="1"/>
<text transform="translate(180.55,199.30) rotate(-45)" text-anchor="end" font-size="8.8" letter-spacing="0.3" fill="#666">2 PM</text>
<rect x="194.32" y="55.04" width="11.5" height="130.36" fill="#4c0026" stroke="#2a0015" stroke-width="0.5"/>
<path d="M188.72 185.40v7.5" stroke="#d6deee" stroke-width="1"/>
<text transform="translate(202.67,199.30) rotate(-45)" text-anchor="end" font-size="8.8" letter-spacing="0.3" fill="#666">3 PM</text>
<rect x="216.44" y="72.47" width="11.5" height="112.93" fill="#4c0026" stroke="#2a0015" stroke-width="0.5"/>
<path d="M210.84 185.40v7.5" stroke="#d6deee" stroke-width="1"/>
<text transform="translate(224.79,199.30) rotate(-45)" text-anchor="end" font-size="8.8" letter-spacing="0.3" fill="#666">4 PM</text>
<rect x="238.56" y="88.09" width="11.5" height="97.31" fill="#4c0026" stroke="#2a0015" stroke-width="0.5"/>
<path d="M232.96 185.40v7.5" stroke="#d6deee" stroke-width="1"/>
<text transform="translate(246.91,199.30) rotate(-45)" text-anchor="end" font-size="8.8" letter-spacing="0.3" fill="#666">5 PM</text>
<rect x="260.68" y="90.69" width="11.5" height="94.71" fill="#4c0026" stroke="#2a0015" stroke-width="0.5"/>
<path d="M255.08 185.40v7.5" stroke="#d6deee" stroke-width="1"/>
<text transform="translate(269.03,199.30) rotate(-45)" text-anchor="end" font-size="8.8" letter-spacing="0.3" fill="#666">6 PM</text>
<rect x="282.80" y="89.91" width="11.5" height="95.49" fill="#4c0026" stroke="#2a0015" stroke-width="0.5"/>
<path d="M277.20 185.40v7.5" stroke="#d6deee" stroke-width="1"/>
<text transform="translate(291.15,199.30) rotate(-45)" text-anchor="end" font-size="8.8" letter-spacing="0.3" fill="#666">7 PM</text>
<rect x="304.92" y="80.28" width="11.5" height="105.12" fill="#4c0026" stroke="#2a0015" stroke-width="0.5"/>
<path d="M299.32 185.40v7.5" stroke="#d6deee" stroke-width="1"/>
<text transform="translate(313.27,199.30) rotate(-45)" text-anchor="end" font-size="8.8" letter-spacing="0.3" fill="#666">8 PM</text>
<rect x="327.04" y="77.42" width="11.5" height="107.98" fill="#4c0026" stroke="#2a0015" stroke-width="0.5"/>
<path d="M321.44 185.40v7.5" stroke="#d6deee" stroke-width="1"/>
<text transform="translate(335.39,199.30) rotate(-45)" text-anchor="end" font-size="8.8" letter-spacing="0.3" fill="#666">9 PM</text>
<rect x="349.16" y="81.32" width="11.5" height="104.08" fill="#4c0026" stroke="#2a0015" stroke-width="0.5"/>
<path d="M343.56 185.40v7.5" stroke="#d6deee" stroke-width="1"/>
<text transform="translate(357.51,199.30) rotate(-45)" text-anchor="end" font-size="8.8" letter-spacing="0.3" fill="#666">10 PM</text>
<rect x="371.28" y="90.95" width="11.5" height="94.45" fill="#4c0026" stroke="#2a0015" stroke-width="0.5"/>
<path d="M365.68 185.40v7.5" stroke="#d6deee" stroke-width="1"/>
<text transform="translate(379.63,199.30) rotate(-45)" text-anchor="end" font-size="8.8" letter-spacing="0.3" fill="#666">11 PM</text>
<rect x="393.40" y="103.96" width="11.5" height="81.44" fill="#4c0026" stroke="#2a0015" stroke-width="0.5"/>
<path d="M387.80 185.40v7.5" stroke="#d6deee" stroke-width="1"/>
<text transform="translate(401.75,199.30) rotate(-45)" text-anchor="end" font-size="8.8" letter-spacing="0.3" fill="#666">Jan 28, 2021 12 AM</text>
<rect x="415.52" y="126.07" width="11.5" height="59.33" fill="#99004c" stroke="#5a0030" stroke-width="0.5"/>
<path d="M409.92 185.40v7.5" stroke="#d6deee" stroke-width="1"/>
<text transform="translate(423.87,199.30) rotate(-45)" text-anchor="end" font-size="8.8" letter-spacing="0.3" fill="#666">1 AM</text>
<rect x="437.64" y="126.85" width="11.5" height="58.55" fill="#99004c" stroke="#5a0030" stroke-width="0.5"/>
<path d="M432.04 185.40v7.5" stroke="#d6deee" stroke-width="1"/>
<text transform="translate(445.99,199.30) rotate(-45)" text-anchor="end" font-size="8.8" letter-spacing="0.3" fill="#666">2 AM</text>
<rect x="459.76" y="134.40" width="11.5" height="51.00" fill="#ff0000" stroke="#7a0000" stroke-width="0.5"/>
<path d="M454.16 185.40v7.5" stroke="#d6deee" stroke-width="1"/>
<text transform="translate(468.11,199.30) rotate(-45)" text-anchor="end" font-size="8.8" letter-spacing="0.3" fill="#666">3 AM</text>
<rect x="481.88" y="139.86" width="11.5" height="45.53" fill="#ff0000" stroke="#7a0000" stroke-width="0.5"/>
<path d="M476.28 185.40v7.5" stroke="#d6deee" stroke-width="1"/>
<text transform="translate(490.23,199.30) rotate(-45)" text-anchor="end" font-size="8.8" letter-spacing="0.3" fill="#666">4 AM</text>
<rect x="504.00" y="129.20" width="11.5" height="56.20" fill="#99004c" stroke="#5a0030" stroke-width="0.5"/>
<path d="M498.40 185.40v7.5" stroke="#d6deee" stroke-width="1"/>
<text transform="translate(512.35,199.30) rotate(-45)" text-anchor="end" font-size="8.8" letter-spacing="0.3" fill="#666">5 AM</text>
<rect x="526.12" y="139.86" width="11.5" height="45.53" fill="#ff0000" stroke="#7a0000" stroke-width="0.5"/>
<path d="M520.52 185.40v7.5" stroke="#d6deee" stroke-width="1"/>
<text transform="translate(534.47,199.30) rotate(-45)" text-anchor="end" font-size="8.8" letter-spacing="0.3" fill="#666">6 AM</text>
<rect x="548.24" y="141.95" width="11.5" height="43.45" fill="#ff0000" stroke="#7a0000" stroke-width="0.5"/>
<path d="M542.64 185.40v7.5" stroke="#d6deee" stroke-width="1"/>
<text transform="translate(556.59,199.30) rotate(-45)" text-anchor="end" font-size="8.8" letter-spacing="0.3" fill="#666">7 AM</text>
<rect x="570.36" y="141.95" width="11.5" height="43.45" fill="#ff0000" stroke="#7a0000" stroke-width="0.5"/>
<path d="M564.76 185.40v7.5" stroke="#d6deee" stroke-width="1"/>
<text transform="translate(578.71,199.30) rotate(-45)" text-anchor="end" font-size="8.8" letter-spacing="0.3" fill="#666">8 AM</text>
<path d="M586.88 185.40v7.5" stroke="#d6deee" stroke-width="1"/>
</svg></div>

<div id="cc" class="abs">
<div class="h blue"><div id="cc1" style="font-size:11.1px;line-height:14px;padding-top:5px">Current Conditions</div><div id="cc2" style="font-size:9px;line-height:14px;padding-top:3px">observed at</div><div id="cc3" style="font-size:11.2px;line-height:16px;padding-top:0px">Jan 28, 2021 8:00 AM (LT)</div></div>
<div class="r"><div>170 AQI</div><div id="unh">Unhealthy</div><div>PM2.5</div></div>
<div class="hm">Health Message</div>
<div class="tx"><span id="tx1">Everyone may begin to experience health</span><br>effects when AQI values are between 151<br>and 200. Members of sensitive groups may<br>experience more serious health effects.</div>
</div>
<div id="note2" class="abs">Note: Values above 500 are considered Beyond</div>
</body></html>
